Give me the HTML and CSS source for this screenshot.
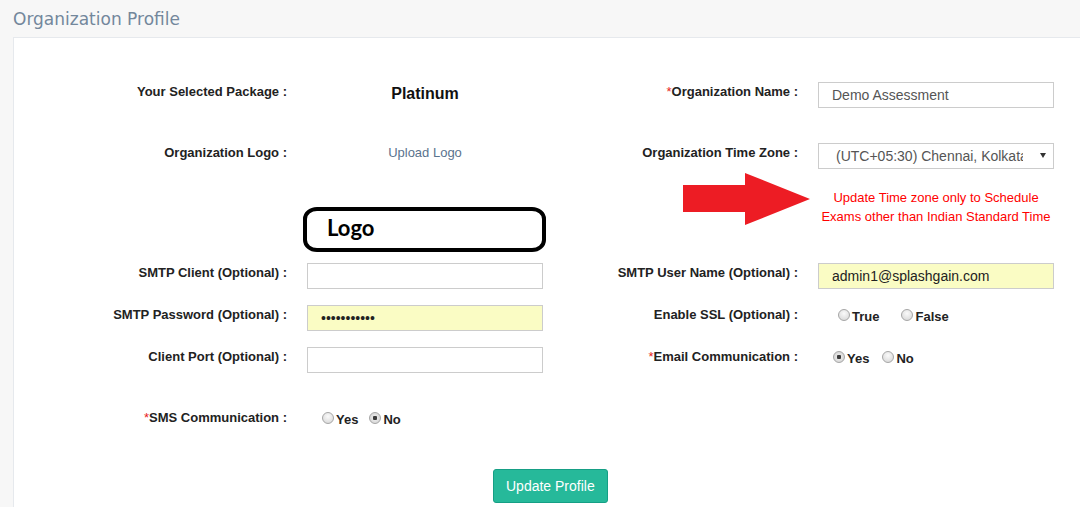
FILE: index.html
```html
<!DOCTYPE html>
<html>

<head>
    <meta charset="UTF-8">
    <title>Organization Profile</title>
    <link rel="stylesheet" href="styles.css">
</head>

<body>
    <h3 class="page-title">Organization Profile</h3>

    <div class="panel">
        <form id="profile-form">
            <div class="form-row">
                <label class="control-label">Your Selected Package :</label>
                <div class="package-name">Platinum</div>
                <label class="control-label"><span class="required">*</span>Organization Name :</label>
                <input class="form-control" type="text" name="org_name" value="Demo Assessment">
            </div>

            <div class="form-row row-gap">
                <label class="control-label">Organization Logo :</label>
                <a class="upload-link" href="#">Upload Logo</a>
                <label class="control-label">Organization Time Zone :</label>
                <div class="select-wrap">
                    <select class="form-control" name="time_zone">
                        <option>(UTC+05:30) Chennai, Kolkata, Mumbai, New Delhi</option>
                    </select>
                </div>
            </div>

            <div class="form-row logo-row">
                <div></div>
                <div class="logo-box">Logo</div>
                <svg class="note-arrow" width="128" height="53" viewBox="0 0 128 53">
                    <polygon points="0,12 62,12 62,0 127,26 62,52 62,39 0,39" fill="#ed1c24" />
                </svg>
                <div class="tz-note">Update Time zone only to Schedule<br>Exams other than Indian Standard Time</div>
            </div>

            <div class="form-row">
                <label class="control-label">SMTP Client (Optional) :</label>
                <input class="form-control" type="text" name="smtp_client">
                <label class="control-label">SMTP User Name (Optional) :</label>
                <input class="form-control filled" type="text" name="smtp_user" value="admin1@splashgain.com">
            </div>

            <div class="form-row row-small">
                <label class="control-label">SMTP Password (Optional) :</label>
                <input class="form-control filled" type="password" name="smtp_password" value="xxxxxxxxxxx">
                <label class="control-label">Enable SSL (Optional) :</label>
                <div class="radio-group ssl">
                    <label class="radio"><input type="radio" name="ssl">True</label>
                    <label class="radio"><input type="radio" name="ssl">False</label>
                </div>
            </div>

            <div class="form-row row-small">
                <label class="control-label">Client Port (Optional) :</label>
                <input class="form-control" type="text" name="client_port">
                <label class="control-label"><span class="required">*</span>Email Communication :</label>
                <div class="radio-group">
                    <label class="radio"><input type="radio" name="email" checked>Yes</label>
                    <label class="radio"><input type="radio" name="email">No</label>
                </div>
            </div>

            <div class="form-row row-gap">
                <label class="control-label"><span class="required">*</span>SMS Communication :</label>
                <div class="radio-group tight">
                    <label class="radio"><input type="radio" name="sms">Yes</label>
                    <label class="radio"><input type="radio" name="sms" checked>No</label>
                </div>
            </div>

            <div class="form-actions">
                <button type="submit" class="btn btn-success">Update Profile</button>
            </div>
        </form>
    </div>
</body>

</html>
```

FILE: styles.css
```css
body {
    margin: 0;
    padding: 0 0 0 13px;
    background-color: #f7f7f7;
    font-family: "Liberation Sans", Arial, sans-serif;
    overflow: hidden;
}

.page-title {
    margin: 0 0 8px;
    padding-top: 9px;
    font-family: "DejaVu Sans", Verdana, sans-serif;
    font-size: 17px;
    font-weight: normal;
    line-height: 20px;
    color: #73879c;
}

.panel {
    background-color: #fff;
    border: 1px solid #e6e9ed;
    margin-right: -20px;
    padding: 44px 0 20px;
}

#profile-form {
    margin-left: -1px;
}

/* four columns: label, field, label, field */
.form-row {
    display: grid;
    grid-template-columns: 274px 236px 235px 236px;
    column-gap: 20px;
    height: 26px;
}

.row-gap {
    margin-top: 35px;
}

.row-small {
    margin-top: 16px;
}

.control-label {
    padding-top: 1px;
    font-size: 13px;
    font-weight: bold;
    line-height: 18px;
    color: #222;
    text-align: right;
    white-space: nowrap;
}

.required {
    color: #e81c1c;
    font-weight: normal;
}

.package-name {
    font-size: 16px;
    font-weight: bold;
    line-height: 24px;
    color: #111;
    text-align: center;
}

.upload-link {
    padding-top: 1px;
    font-size: 13px;
    line-height: 18px;
    color: #5a738e;
    text-align: center;
    text-decoration: none;
}

.form-control {
    box-sizing: border-box;
    width: 100%;
    height: 26px;
    margin: 0;
    padding: 0 13px;
    border: 1px solid #ccc;
    border-radius: 0;
    background-color: #fff;
    font-family: "Liberation Sans", Arial, sans-serif;
    font-size: 14px;
    color: #555;
    outline: none;
}

.form-control.filled {
    background-color: #fafcc4;
    color: #222;
}

.select-wrap {
    position: relative;
}

.select-wrap select {
    appearance: none;
    -webkit-appearance: none;
    padding: 0 30px 0 17px;
}

.select-wrap::after {
    content: "";
    position: absolute;
    top: 10px;
    right: 8px;
    border-left: 3px solid transparent;
    border-right: 3px solid transparent;
    border-top: 5px solid #333;
}

/* annotation row under the time zone */
.logo-row {
    height: 94px;
}

.logo-box {
    box-sizing: border-box;
    align-self: start;
    width: 243px;
    height: 45px;
    margin: 38px 0 0 -4px;
    padding: 6px 0 0 20px;
    border: 4px solid #000;
    border-radius: 14px / 12px;
    font-family: Lato, "Open Sans", sans-serif;
    font-size: 22px;
    font-weight: bold;
    line-height: 22px;
    color: #000;
}

.note-arrow {
    display: block;
    justify-self: end;
    margin: 4px -13px 0 0;
}

.tz-note {
    margin-top: 19px;
    font-size: 13px;
    line-height: 19px;
    color: #f00;
    text-align: center;
    white-space: nowrap;
}

.radio-group {
    display: flex;
    gap: 13px;
    padding: 3px 0 0 15px;
}

.radio-group.ssl {
    gap: 22px;
    padding-left: 20px;
}

.radio-group.tight {
    gap: 11px;
}

.radio {
    display: flex;
    align-items: flex-start;
    font-size: 13px;
    font-weight: bold;
    line-height: 18px;
    color: #222;
}

.radio input {
    appearance: none;
    -webkit-appearance: none;
    box-sizing: border-box;
    width: 12px;
    height: 12px;
    margin: 1px 2px 0 0;
    border: 1px solid #a6a6a6;
    border-radius: 50%;
    background: radial-gradient(circle at 50% 35%, #fafafa, #d4d4d4);
}

.radio input:checked {
    background: radial-gradient(circle, #3c3c3c 0, #3c3c3c 2px, #e6e6e6 2.5px, #d2d2d2 6px);
}

.form-actions {
    margin-top: 35px;
    padding-left: 480px;
}

.btn {
    height: 34px;
    padding: 0 12px;
    border: 1px solid #169f85;
    border-radius: 3px;
    font-family: "Liberation Sans", Arial, sans-serif;
    font-size: 14px;
    cursor: pointer;
}

.btn-success {
    background-color: #26b99a;
    color: #fff;
}

.btn-success:hover {
    background-color: #169f85;
}
```
